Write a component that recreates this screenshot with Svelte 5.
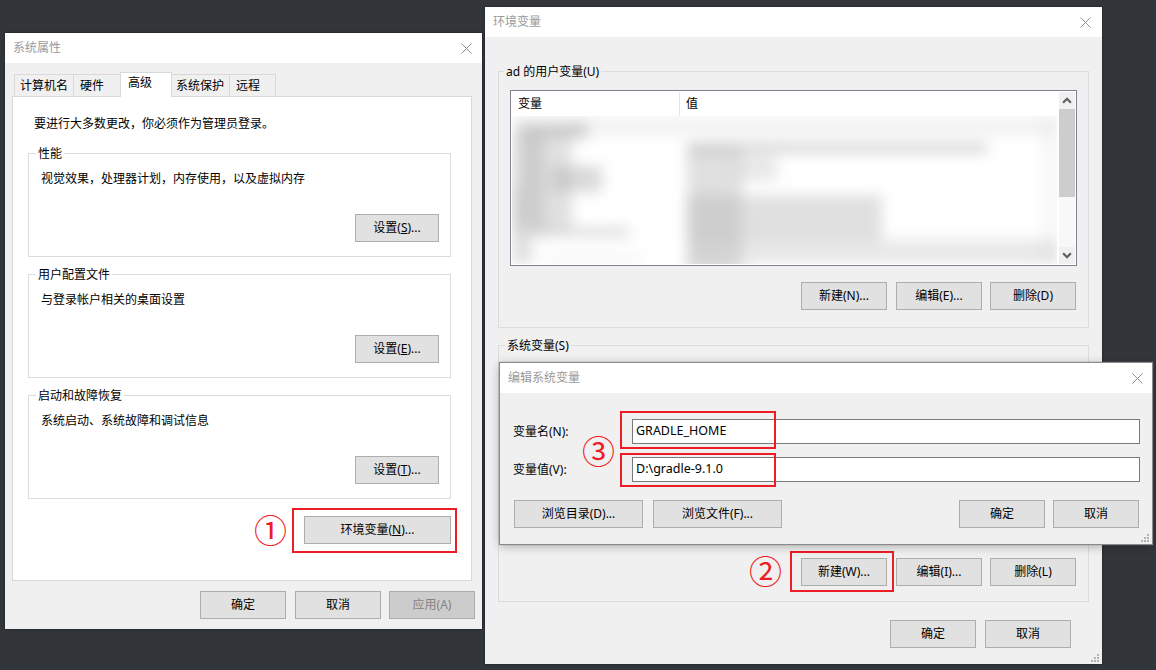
<script lang="ts">
  const perfGroups = [
    { title: '性能', desc: '视觉效果，处理器计划，内存使用，以及虚拟内存', key: 'S' },
    { title: '用户配置文件', desc: '与登录帐户相关的桌面设置', key: 'E' },
    { title: '启动和故障恢复', desc: '系统启动、系统故障和调试信息', key: 'T' }
  ];
  const tabs = ['计算机名', '硬件', '高级', '系统保护', '远程'];

  // grey masses behind the blur, [x, y, w, h, opacity]
  const smudges = [
    [0, 0, 545, 20, 0.16],
    [6, 8, 70, 14, 0.65],
    [0, 20, 32, 100, 0.45],
    [10, 20, 50, 50, 0.4],
    [40, 50, 50, 26, 0.5],
    [0, 70, 60, 42, 0.42],
    [26, 112, 92, 8, 0.55],
    [0, 118, 20, 30, 0.42],
    [30, 136, 100, 12, 0.1],
    [175, 27, 300, 10, 0.55],
    [175, 30, 55, 130, 0.42],
    [225, 40, 40, 25, 0.3],
    [175, 79, 195, 46, 0.42],
    [175, 124, 370, 24, 0.3],
    [530, 0, 20, 148, 0.1]
  ];
</script>

<div class="desk">
  <section class="win w1">
    <header class="title"><span>系统属性</span><svg class="x" viewBox="0 0 11 11"><path d="M.5.5l10 10M10.500.5l-10 10"/></svg></header>
    <div class="body b1">
      <div class="tabs">
        {#each tabs as t, i}
          <span class="tab" class:on={i === 2}>{t}</span>
        {/each}
      </div>
      <div class="panel">
        <p class="lead">要进行大多数更改，你必须作为管理员登录。</p>
        {#each perfGroups as g}
          <fieldset class="grp">
            <legend>{g.title}</legend>
            <p class="desc">{g.desc}</p>
            <div class="row-end"><button class="btn">设置(<u>{g.key}</u>)...</button></div>
          </fieldset>
        {/each}
        <div class="env-row">
          <span class="num">①</span>
          <div class="mark m-env"><button class="btn wide">环境变量(<u>N</u>)...</button></div>
        </div>
      </div>
      <div class="foot f1">
        <button class="btn first">确定</button>
        <button class="btn">取消</button>
        <button class="btn off">应用(A)</button>
      </div>
    </div>
  </section>

  <section class="win w2">
    <header class="title"><span>环境变量</span><svg class="x" viewBox="0 0 11 11"><path d="M.5.5l10 10M10.500.5l-10 10"/></svg></header>
    <div class="body b2">
      <fieldset class="grp g-user">
        <legend>ad 的用户变量(U)</legend>
        <div class="list">
          <div class="cols"><span class="c1">变量</span><span class="c2">值</span></div>
          <div class="blur">
            <div class="smudge-layer">
              {#each smudges as s}
                <i style="left:{s[0]}px;top:{s[1]}px;width:{s[2]}px;height:{s[3]}px;opacity:{s[4]}"></i>
              {/each}
            </div>
          </div>
          <div class="sbar">
            <svg viewBox="0 0 9 6"><path d="M1 5l3.500-3.500L8 5"/></svg>
            <div class="thumb"></div>
            <div class="rest"></div>
            <svg viewBox="0 0 9 6"><path d="M1 1l3.500 3.500L8 1"/></svg>
          </div>
        </div>
        <div class="row-end trio">
          <button class="btn first">新建(N)...</button>
          <button class="btn">编辑(E)...</button>
          <button class="btn">删除(D)</button>
        </div>
      </fieldset>
      <fieldset class="grp g-sys">
        <legend>系统变量(S)</legend>
        <div class="list short"></div>
        <div class="row-end trio t-sys">
          <span class="num">②</span>
          <div class="mark m-new"><button class="btn">新建(W)...</button></div>
          <button class="btn">编辑(I)...</button>
          <button class="btn">删除(L)</button>
        </div>
      </fieldset>
      <div class="foot f2">
        <button class="btn">确定</button>
        <button class="btn">取消</button>
      </div>
    </div>
    <svg class="grip" viewBox="0 0 8 8"><path d="M6 0h2v2H6zM3 3h2v2H3zM6 3h2v2H6zM0 6h2v2H0zM3 6h2v2H3zM6 6h2v2H6z"/></svg>
  </section>

  <section class="win w3">
    <header class="title"><span>编辑系统变量</span><svg class="x" viewBox="0 0 11 11"><path d="M.5.5l10 10M10.500.5l-10 10"/></svg></header>
    <div class="body b3">
      <div class="fields">
        <label class="field"><span>变量名(N):</span><span class="input">GRADLE_HOME</span></label>
        <label class="field"><span>变量值(V):</span><span class="input">D:\gradle-9.1.0</span></label>
      </div>
      <div class="actions">
        <button class="btn browse">浏览目录(D)...</button>
        <button class="btn browse">浏览文件(F)...</button>
        <span class="spring"></span>
        <button class="btn">确定</button>
        <button class="btn">取消</button>
      </div>
    </div>
    <svg class="grip" viewBox="0 0 8 8"><path d="M6 0h2v2H6zM3 3h2v2H3zM6 3h2v2H6zM0 6h2v2H0zM3 6h2v2H3zM6 6h2v2H6z"/></svg>
    <span class="num n3">③</span>
    <div class="mark box-a"></div>
    <div class="mark box-b"></div>
  </section>
</div>

<style>
  :global(body) { margin: 0; background: #32363b; }

  .desk {
    position: relative;
    width: 1156px;
    height: 670px;
    overflow: hidden;
    background: #32363b;
    font: 12px/16px "Noto Sans", "Noto Sans CJK SC", sans-serif;
    color: #000;
  }

  .win {
    position: absolute;
    display: flex;
    flex-direction: column;
    box-sizing: border-box;
    background: #f0f0f0;
    box-shadow: 0 0 2px rgba(0, 0, 0, 0.55);
  }
  .w1 { left: 5px; top: 33px; width: 477px; height: 596px; }
  .w2 { left: 485px; top: 7px; width: 617px; height: 657px; }
  .w3 {
    left: 500px; top: 363px; width: 652px; height: 181px;
    box-shadow: 0 0 1px 1px #8a8a8a, 0 2px 10px rgba(0, 0, 0, 0.3);
  }

  .title {
    flex: none;
    height: 30px;
    display: flex;
    align-items: center;
    justify-content: space-between;
    padding: 0 10px 0 8px;
    background: #fff;
    color: #9a9a9a;
  }
  .w2 .title { padding-right: 11px; }
  .w3 .title { padding-right: 9px; }
  .x { width: 11px; height: 11px; fill: none; stroke: #8c8c8c; stroke-width: 1; }

  .body { flex: 1; display: flex; flex-direction: column; min-height: 0; }

  .btn {
    flex: none;
    box-sizing: border-box;
    width: 86px;
    height: 28px;
    padding: 0;
    border: 1px solid #adadad;
    background: #e1e1e1;
    font: inherit;
    color: #000;
  }
  .btn.off { background: #cccccc; color: #838383; }
  .btn.wide { width: 147px; }
  .btn.browse { width: 129px; }
  .btn.first { margin-right: 1px; }

  .b1 { padding: 11px 7px 10px 7px; }
  .tabs { display: flex; flex: none; height: 22px; padding-left: 2px; align-items: flex-end; position: relative; z-index: 1; }
  .tab {
    box-sizing: border-box;
    height: 22px;
    padding-top: 3px;
    border: 1px solid #d9d9d9;
    border-bottom: 0;
    border-left-width: 0;
    background: #f0f0f0;
    white-space: nowrap;
  }
  .tab:nth-child(1) { width: 60px; padding-left: 5px; border-left-width: 1px; }
  .tab:nth-child(2) { width: 47px; padding-left: 6px; }
  .tab:nth-child(3) { width: 52px; padding-left: 7px; }
  .tab:nth-child(4) { width: 58px; padding-left: 4px; }
  .tab:nth-child(5) { width: 46px; padding-left: 6px; }
  .tab.on {
    height: 25px;
    margin-bottom: -1px;
    margin-left: -1px;
    padding-top: 2px;
    background: #fff;
    border-left-width: 1px;
  }
  .panel {
    flex: 1;
    box-sizing: border-box;
    margin-right: 3px;
    padding: 19px 20px 0 15px;
    background: #fff;
    border: 1px solid #d9d9d9;
    display: flex;
    flex-direction: column;
  }
  .lead { margin: 0 0 13px 6px; height: 16px; }

  .grp {
    min-width: 0;
    margin: 0;
    padding: 0;
    border: 1px solid #dcdcdc;
    box-sizing: border-box;
  }
  legend { position: relative; top: 1px; padding: 0 2px; margin-left: -6px; line-height: 16px; }
  .panel .grp { flex: none; height: 112px; margin-bottom: 9px; padding: 10px 11px 0 12px; }
  .panel .grp legend { margin-left: -5px; }
  .g-sys legend { margin-left: -5px; }
  .desc { margin: 0 0 27px; height: 16px; }
  .row-end { display: flex; justify-content: flex-end; }
  .panel .btn:not(.wide) { width: 84px; }

  .env-row {
    display: flex;
    justify-content: flex-end;
    align-items: center;
    margin-right: -6px;
    gap: 5px;
  }
  .num { color: #ee1c25; font-size: 33px; line-height: 38px; }
  .mark { box-sizing: border-box; border: 2px solid #ee1c25; }
  .m-env { width: 165px; height: 45px; padding: 6px 0 0 10px; }

  .foot { display: flex; justify-content: flex-end; margin-top: 10px; gap: 8px; }

  .b2 { padding: 26px 13px 0 13px; }
  .g-user { flex: none; height: 265px; padding: 11px 11px 0 11px; }
  .list {
    position: relative;
    box-sizing: border-box;
    height: 176px;
    border: 1px solid #82828f;
    background: #fff;
    padding: 1px;
    overflow: hidden;
  }
  .cols { display: flex; height: 24px; line-height: 24px; padding-right: 18px; }
  .c1 { width: 161px; padding-left: 6px; border-right: 1px solid #e5e5e5; }
  .c2 { padding-left: 6px; }
  .blur {
    height: 148px;
    margin-right: 18px;
    overflow: hidden;
    background: #fff;
  }
  .smudge-layer { position: relative; height: 100%; filter: blur(7px); }
  .smudge-layer i { position: absolute; background: #b4b4b4; }
  .sbar {
    position: absolute;
    right: 1px;
    top: 1px;
    bottom: 1px;
    width: 17px;
    display: flex;
    flex-direction: column;
    background: #f8f8f8;
    border-left: 1px solid #fff;
    box-sizing: border-box;
  }
  .sbar svg { flex: none; height: 17px; padding: 5px 3px; box-sizing: border-box; background: #f0f0f0; fill: none; stroke: #606060; stroke-width: 2; }
  .thumb { height: 88px; background: #cdcdcd; }
  .rest { flex: 1; }

  .trio { gap: 8px; margin: 16px 1px 0 0; }
  .g-sys { flex: none; height: 265px; margin-top: 9px; padding: 11px 11px 0 11px; }
  .short { height: 180px; border-color: #a0a0a0; }
  .t-sys { align-items: center; margin-top: 7px; }
  .m-new {
    width: 104px;
    height: 41px;
    padding: 5px 0 0 9px;
    margin-right: -6px;
  }
  .f2 { margin: 18px 18px 0 0; gap: 9px; }

  .grip { position: absolute; right: 3px; bottom: 2px; width: 8px; height: 8px; fill: #b4b4b4; }

  .b3 { padding: 26px 12px 16px 13px; }
  .fields { display: flex; flex-direction: column; gap: 13px; }
  .field { display: flex; align-items: center; height: 25px; }
  .field > span:first-child { width: 119px; flex: none; }
  .input {
    flex: 1;
    box-sizing: border-box;
    height: 25px;
    padding: 0 3px;
    border: 1px solid #7a7a7a;
    background: #fff;
    font-size: 12.5px;
    line-height: 21px;
  }
  .actions { display: flex; gap: 10px; margin: 18px 1px 0 1px; }
  .spring { flex: 1; }
  .actions .btn:last-child { margin-left: -2px; }

  .n3 { position: absolute; left: 82px; top: 70px; }
  .box-a { position: absolute; left: 120px; top: 48px; width: 156px; height: 38px; }
  .box-b { position: absolute; left: 120px; top: 90px; width: 156px; height: 34px; }
</style>
